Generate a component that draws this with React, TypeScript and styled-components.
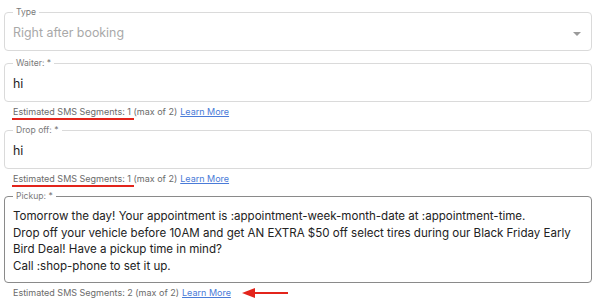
import React from "react";
import styled, { createGlobalStyle } from "styled-components";

const Global = createGlobalStyle`
  html, body { margin: 0; padding: 0; background: #fff; }
  body { font-family: Inter, "Noto Sans", sans-serif; }
`;

const Page = styled.div`
  width: 588px;
  padding: 7px 0 0 4px;
  display: flex;
  flex-direction: column;
`;

const Field = styled.fieldset<{ $dark?: boolean; $gap?: number }>`
  margin: 0;
  margin-top: ${(p) => p.$gap ?? 0}px;
  padding: 0 8px;
  border: 1px solid ${(p) => (p.$dark ? "#8a8a8a" : "#dadada")};
  border-radius: 4px;
  min-width: 0;
  position: relative;
`;

const Legend = styled.legend`
  font-size: 8.6px;
  line-height: 11px;
  color: #7a7a7a;
  padding: 0 3px;
  margin-left: 0;
`;

const Value = styled.div<{ $muted?: boolean }>`
  font-size: 12.4px;
  line-height: 16px;
  height: 16px;
  padding: 7px 0 9px;
  color: ${(p) => (p.$muted ? "#a9a9a9" : "#222")};
`;

const Multi = styled.div`
  font-size: 11.55px;
  line-height: 16.7px;
  color: #222;
  padding: 6px 0 7px;
`;

const Caret = styled.span`
  position: absolute;
  right: 10px;
  top: 14px;
  width: 0;
  height: 0;
  border-left: 4px solid transparent;
  border-right: 4px solid transparent;
  border-top: 4px solid #9a9a9a;
`;

const Helper = styled.div`
  font-size: 9px;
  line-height: 12px;
  color: #6b6b6b;
  padding: 4px 0 0 9px;
  display: flex;
  align-items: center;
  gap: 3px;
`;

const Marked = styled.span`
  position: relative;
  &::after {
    content: "";
    position: absolute;
    left: -1px;
    right: -3px;
    bottom: -3px;
    height: 2px;
    background: #e3241b;
  }
`;

const Link = styled.a`
  color: #4a7bd8;
  text-decoration: underline;
  text-underline-offset: 1px;
`;

const Arrow = styled.svg`
  margin-left: 8px;
`;

function Helpers({ n, mark, arrow }: { n: number; mark?: boolean; arrow?: boolean }) {
  const main = `Estimated SMS Segments: ${n}`;
  return (
    <Helper>
      <span>
        {mark ? <Marked>{main}</Marked> : main} (max of 2)
      </span>
      <Link>Learn More</Link>
      {arrow && (
        <Arrow width="48" height="12" viewBox="0 0 48 12">
          <path d="M46 6 H10" stroke="#e3241b" strokeWidth="2.2" fill="none" />
          <path d="M0 6 L13 1 L13 11 Z" fill="#e3241b" />
        </Arrow>
      )}
    </Helper>
  );
}

export default function App() {
  return (
    <>
      <Global />
      <Page>
        <Field>
          <Legend>Type</Legend>
          <Value $muted>Right after booking</Value>
          <Caret />
        </Field>
        <Field $gap={7}>
          <Legend>Waiter: *</Legend>
          <Value>hi</Value>
        </Field>
        <Helpers n={1} mark />
        <Field $gap={7}>
          <Legend>Drop off: *</Legend>
          <Value>hi</Value>
        </Field>
        <Helpers n={1} mark />
        <Field $gap={6} $dark>
          <Legend>Pickup: *</Legend>
          <Multi>
            Tomorrow the day! Your appointment is :appointment-week-month-date at :appointment-time.
            <br />
            Drop off your vehicle before 10AM and get AN EXTRA $50 off select tires during our Black Friday Early
            Bird Deal! Have a pickup time in mind?
            <br />
            Call :shop-phone to set it up.
          </Multi>
        </Field>
        <Helpers n={2} arrow />
      </Page>
    </>
  );
}
